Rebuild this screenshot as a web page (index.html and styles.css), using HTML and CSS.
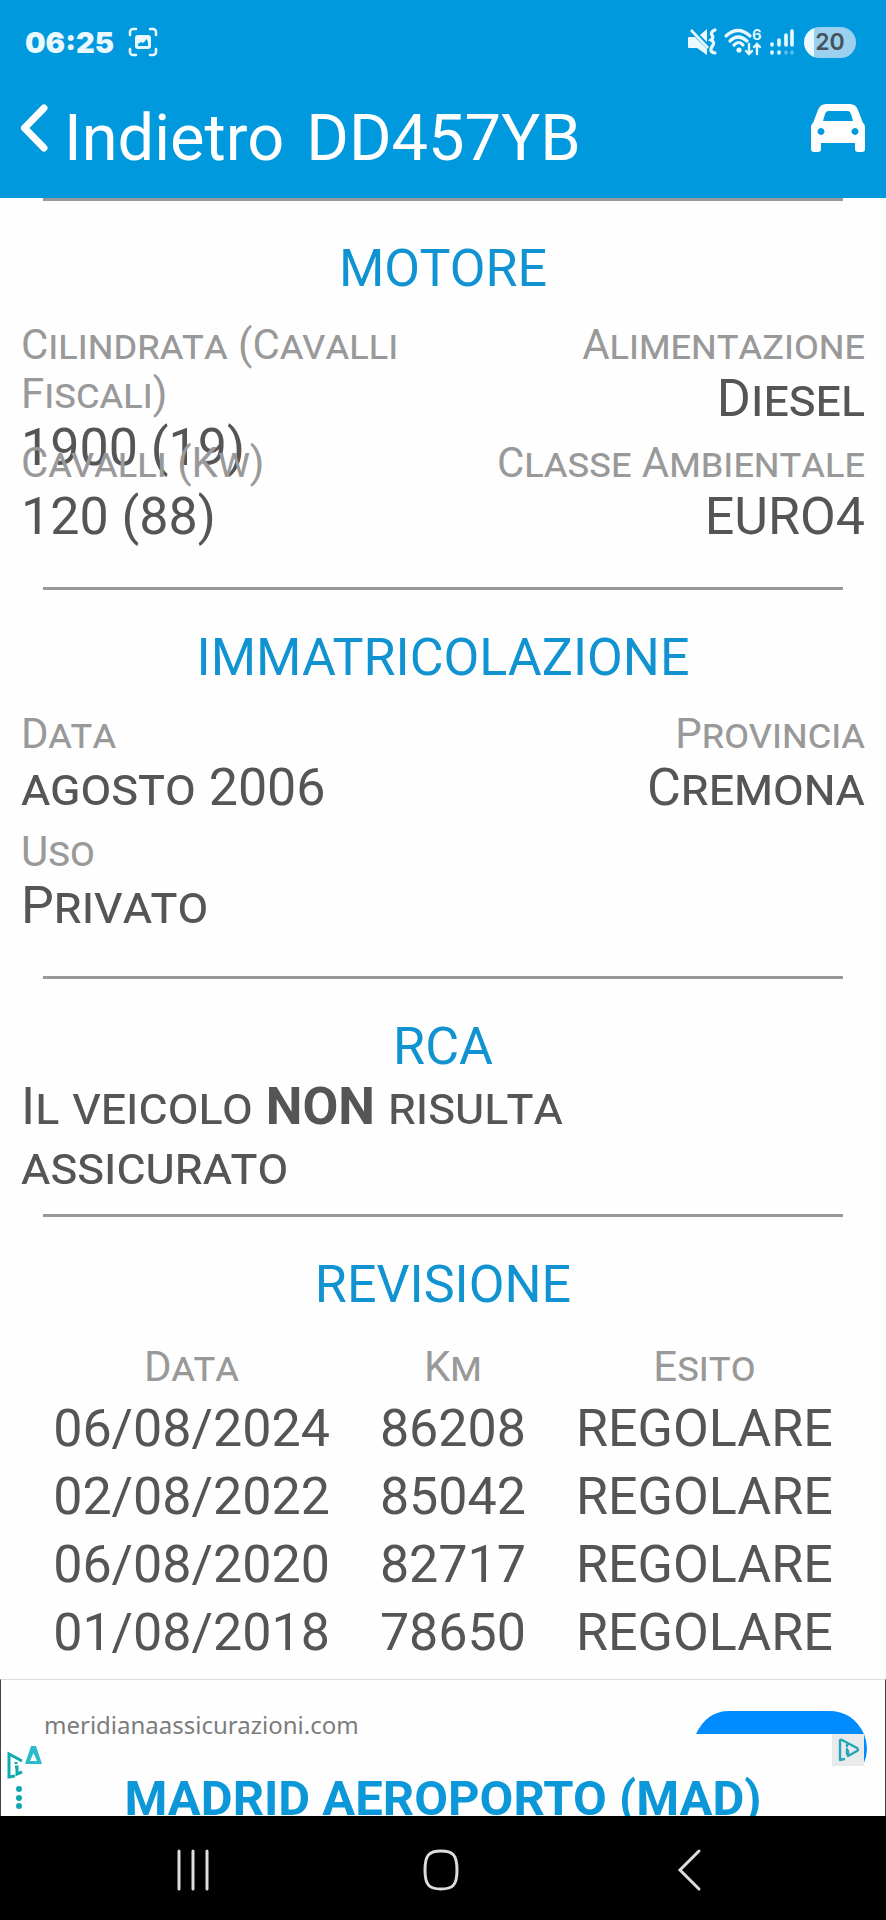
FILE: index.html
```
<!DOCTYPE html>
<html lang="it">
<head>
  <meta charset="UTF-8">
  <title>DD457YB</title>
  <meta name="viewport" content="width=device-width, initial-scale=1.0">
  <link rel="stylesheet" href="styles.css">
</head>
<body>

  <header>
    <div class="status-bar">
      <span class="clock">06:25</span>
      <svg class="capture" width="30" height="30" viewBox="0 0 30 30" fill="none" stroke="#eaf8ff" stroke-width="2.6" stroke-linecap="round">
        <path d="M2 8V5a3 3 0 0 1 3-3h3M22 2h3a3 3 0 0 1 3 3v3M28 22v3a3 3 0 0 1-3 3h-3M8 28H5a3 3 0 0 1-3-3v-3"/>
        <rect x="7" y="8" width="16" height="14" rx="3" fill="#eaf8ff" stroke="none"/>
        <path d="M10 19v-2l3-2 2 1 4-4 1 4v3z" fill="#0099dd" stroke="none"/>
      </svg>
      <div class="status-icons">
        <!-- muted -->
        <svg width="29" height="28" viewBox="0 0 29 28" fill="#eaf8ff">
          <path d="M1 9h6l12 12v6L9 20H1a1 1 0 0 1-1-1v-9a1 1 0 0 1 1-1zM19 1v13l-7-7z"/>
          <path d="M3 2l17 18" stroke="#eaf8ff" stroke-width="2.6"/>
          <path d="M27 2q-5 2-3 5t-1 5q4 2 2 5t-2 4q-1 3 4 4" fill="none" stroke="#eaf8ff" stroke-width="3.2" stroke-linecap="round"/>
        </svg>
        <!-- wifi 6 -->
        <svg width="38" height="28" viewBox="0 0 38 28" fill="none" stroke="#eaf8ff" stroke-width="3.2" stroke-linecap="round">
          <path d="M2 8q12-11 24 0M6 13q8-8 17 0M10 17q5-5 9 0"/>
          <circle cx="15" cy="22" r="2.6" fill="#eaf8ff" stroke="none"/>
          <path d="M25 16v9M22 23l3 3 3-3M33 26v-9M30 19l3-3 3 3" stroke-width="2.4"/>
          <text class="wifi-gen" x="28" y="12">6</text>
        </svg>
        <!-- signal -->
        <svg width="26" height="28" viewBox="0 0 26 28" stroke="#eaf8ff" stroke-width="3.6" stroke-linecap="round">
          <path d="M3 16v1M10 12v5M17 7v10M23 3v14M3 24v1M10 24v1"/>
          <path d="M17 24v1M23 24v1" stroke="#5cbdec"/>
        </svg>
        <span class="battery">20</span>
      </div>
    </div>
    <div class="title-bar">
      <button class="back" aria-label="Indietro">
        <svg width="28" height="50" viewBox="0 0 28 50" fill="none" stroke="#fff" stroke-width="7" stroke-linecap="round" stroke-linejoin="round">
          <path d="M24 5L4.500 25L24 45"/>
        </svg>
        <span>Indietro</span>
      </button>
      <h1>DD457YB</h1>
      <button class="car" aria-label="Veicolo">
        <svg width="56" height="50" viewBox="0 0 56 50">
          <path fill="#fff" fill-rule="evenodd" d="M16 1h24q6 0 8 6l5 13q2 1 2 5v21q0 3-3 3h-4q-3 0-3-3v-6H11v6q0 3-3 3H4q-3 0-3-3V25q0-4 2-5L8 7q2-6 8-6zM18 8q-2 0-3 3l-2 7h30l-2-7q-1-3-3-3zM11 25a3.500 3.500 0 1 0 .01 0zM45 25a3.500 3.500 0 1 0 .01 0z"/>
        </svg>
      </button>
    </div>
  </header>

  <main>
    <hr>
    <section>
      <h2>MOTORE</h2>
      <div class="row">
        <div class="cell">
          <div class="label">Cilindrata (Cavalli Fiscali)</div>
          <div class="value">1900 (19)</div>
        </div>
        <div class="cell right">
          <div class="label">Alimentazione</div>
          <div class="value">Diesel</div>
        </div>
      </div>
      <div class="row">
        <div class="cell">
          <div class="label">Cavalli (Kw)</div>
          <div class="value">120 (88)</div>
        </div>
        <div class="cell right">
          <div class="label">Classe Ambientale</div>
          <div class="value">EURO4</div>
        </div>
      </div>
    </section>

    <hr>
    <section>
      <h2>IMMATRICOLAZIONE</h2>
      <div class="row">
        <div class="cell">
          <div class="label">Data</div>
          <div class="value">agosto 2006</div>
        </div>
        <div class="cell right">
          <div class="label">Provincia</div>
          <div class="value">Cremona</div>
        </div>
      </div>
      <div class="row">
        <div class="cell">
          <div class="label">Uso</div>
          <div class="value">Privato</div>
        </div>
      </div>
    </section>

    <hr>
    <section class="rca">
      <h2>RCA</h2>
      <p>Il veicolo <b>NON</b> risulta assicurato</p>
    </section>

    <hr>
    <section class="last">
      <h2>REVISIONE</h2>
      <table>
        <thead>
          <tr><th>Data</th><th>Km</th><th>Esito</th></tr>
        </thead>
        <tbody>
          <tr><td>06/08/2024</td><td>86208</td><td>REGOLARE</td></tr>
          <tr><td>02/08/2022</td><td>85042</td><td>REGOLARE</td></tr>
          <tr><td>06/08/2020</td><td>82717</td><td>REGOLARE</td></tr>
          <tr><td>01/08/2018</td><td>78650</td><td>REGOLARE</td></tr>
        </tbody>
      </table>
    </section>
  </main>

  <aside class="ad">
    <div class="ad-top">
      <a class="ad-url" href="#">meridianaassicurazioni.com</a>
      <button class="ad-cta" aria-label="Apri">
        <svg width="174" height="56" viewBox="0 0 174 56">
          <path fill="#008cff" d="M3 23Q14 0 36 0H136Q160 0 171 23Q177 38 171 52V23z"/>
          <rect x="139" y="23" width="32" height="32" fill="#e9eaec"/>
          <path d="M151 48l-4 1V30q0-2 2-1l15 8q2 2 0 3l-9 5v-5M154 34v1M154 38v5" fill="none" stroke="#22a7b8" stroke-width="2.400" stroke-linecap="round" stroke-linejoin="round"/>
        </svg>
      </button>
    </div>
    <a class="ad-title" href="#">MADRID AEROPORTO (MAD)</a>
    <svg class="ad-mark" width="38" height="66" viewBox="0 0 38 66" fill="none" stroke="#10a9b0" stroke-width="3">
      <path d="M15 16L2 9V32L8 31M9 17v2M8 22h2v7l5-2"/>
      <path d="M24 1h5l6 18H18zM26.500 8l-3.500 8h7z" fill="#2bbccb" fill-rule="evenodd" stroke="none"/>
      <g fill="#10a9b0" stroke="none">
        <circle cx="12" cy="44" r="3"/>
        <circle cx="12" cy="53" r="3"/>
        <circle cx="12" cy="61" r="3"/>
      </g>
    </svg>
  </aside>

  <nav>
    <button aria-label="Recenti">
      <svg width="32" height="36" viewBox="0 0 32 36" stroke="#ddd" stroke-width="3" stroke-linecap="round">
        <path d="M2 -1v38M16 -1v38M30 -1v38"/>
      </svg>
    </button>
    <button aria-label="Home">
      <svg width="36" height="36" viewBox="0 0 36 36" fill="none" stroke="#ddd" stroke-width="3">
        <path d="M18 -1C30 -1 34 3 34 18S30 37 18 37S2 33 2 18S6 -1 18 -1z"/>
      </svg>
    </button>
    <button aria-label="Indietro">
      <svg width="24" height="36" viewBox="0 0 24 36" fill="none" stroke="#ddd" stroke-width="3" stroke-linecap="round">
        <path d="M22 -1L3 18L22 37"/>
      </svg>
    </button>
  </nav>

</body>
</html>
```
FILE: styles.css
```
* {
  box-sizing: border-box;
}

body {
  margin: 0;
  min-height: 100vh;
  display: flex;
  flex-direction: column;
  font-family: Roboto, sans-serif;
  background: #fefefe;
  color: #555;
}

button {
  padding: 0;
  border: 0;
  background: none;
  color: inherit;
  font: inherit;
}

svg {
  display: block;
  overflow: visible;
}

header {
  height: 198px;
  background: #0099dd;
  color: #fff;
}

/* status bar */
.status-bar {
  height: 84px;
  padding: 0 30px 0 25px;
  display: flex;
  align-items: center;
  color: #eaf8ff;
}

.clock {
  font-family: Inter, sans-serif;
  font-size: 29px;
  font-weight: 900;
}

.capture {
  margin-left: 14px;
}

.status-icons {
  margin-left: auto;
  display: flex;
  align-items: center;
  gap: 7px;
}

.wifi-gen {
  font-family: Inter, sans-serif;
  font-size: 15px;
  font-weight: 600;
  fill: #eaf8ff;
  stroke: none;
}

.battery {
  width: 52px;
  height: 31px;
  margin-left: 2px;
  border-radius: 16px;
  background: linear-gradient(90deg, #eaf8ff 20%, #9bd0ef 20%);
  color: #45525c;
  font-family: Inter, sans-serif;
  font-size: 23px;
  font-weight: 600;
  line-height: 31px;
  text-align: center;
}

/* title bar */
.title-bar {
  padding: 0 20px;
  display: flex;
  align-items: flex-start;
  font-size: 65px;
  line-height: 78px;
}

.back {
  display: flex;
  gap: 16px;
}

.back svg,
.car svg {
  margin-top: 19px;
}

.back span,
h1 {
  margin-top: 15px;
}

h1 {
  margin-bottom: 0;
  margin-left: 22px;
  font-size: 65px;
  font-weight: 400;
}

.car {
  margin-left: auto;
}

/* content */
main {
  flex: 1;
}

hr {
  height: 3px;
  margin: 0 43px 38px;
  border: 0;
  background: #999;
}

section {
  padding: 0 21px 31px;
}

h2 {
  margin: 0 0 21px;
  color: #1093d0;
  font-size: 52px;
  font-weight: 400;
  line-height: 60px;
  text-align: center;
}

.row {
  height: 118px;
  display: flex;
}

.cell {
  width: 50%;
}

.right {
  text-align: right;
}

.label,
th {
  color: #999;
  font-size: 42px;
  font-weight: 400;
  font-variant: small-caps;
  line-height: 49px;
}

.value,
td,
.rca p {
  font-size: 52px;
  font-variant: small-caps;
  line-height: 60px;
}

.rca {
  padding-bottom: 17px;
}

.rca h2 {
  margin-bottom: 0;
}

.rca p {
  max-width: 90%;
  margin: 0;
}

.last {
  padding-bottom: 8px;
}

table {
  margin: 0 auto;
  border-collapse: collapse;
  text-align: center;
}

th {
  padding: 6px 25px 4px;
}

td {
  padding: 4px 25px;
}

/* ad banner */
.ad {
  position: relative;
  height: 137px;
  padding: 31px 18px 0 43px;
  overflow: hidden;
  border: solid #444;
  border-width: 0 1px;
  border-top: 1px solid #ddd;
  background: #fefefe;
}

.ad-top {
  display: flex;
  justify-content: space-between;
  height: 56px;
}

.ad a {
  text-decoration: none;
}

.ad-url {
  color: #7c7c7c;
  font-family: "Noto Sans", sans-serif;
  font-size: 24px;
  line-height: 28px;
}

.ad-title {
  display: block;
  margin-left: -25px;
  color: #0b97d8;
  font-size: 49px;
  font-weight: 700;
  line-height: 64px;
  text-align: center;
}

.ad-mark {
  position: absolute;
  top: 65px;
  left: 6px;
}

/* android buttons */
nav {
  height: 104px;
  padding: 4px 73px 0 69px;
  display: flex;
  align-items: center;
  background: #000;
}

nav button {
  flex: 1;
  display: flex;
  justify-content: center;
}
```
